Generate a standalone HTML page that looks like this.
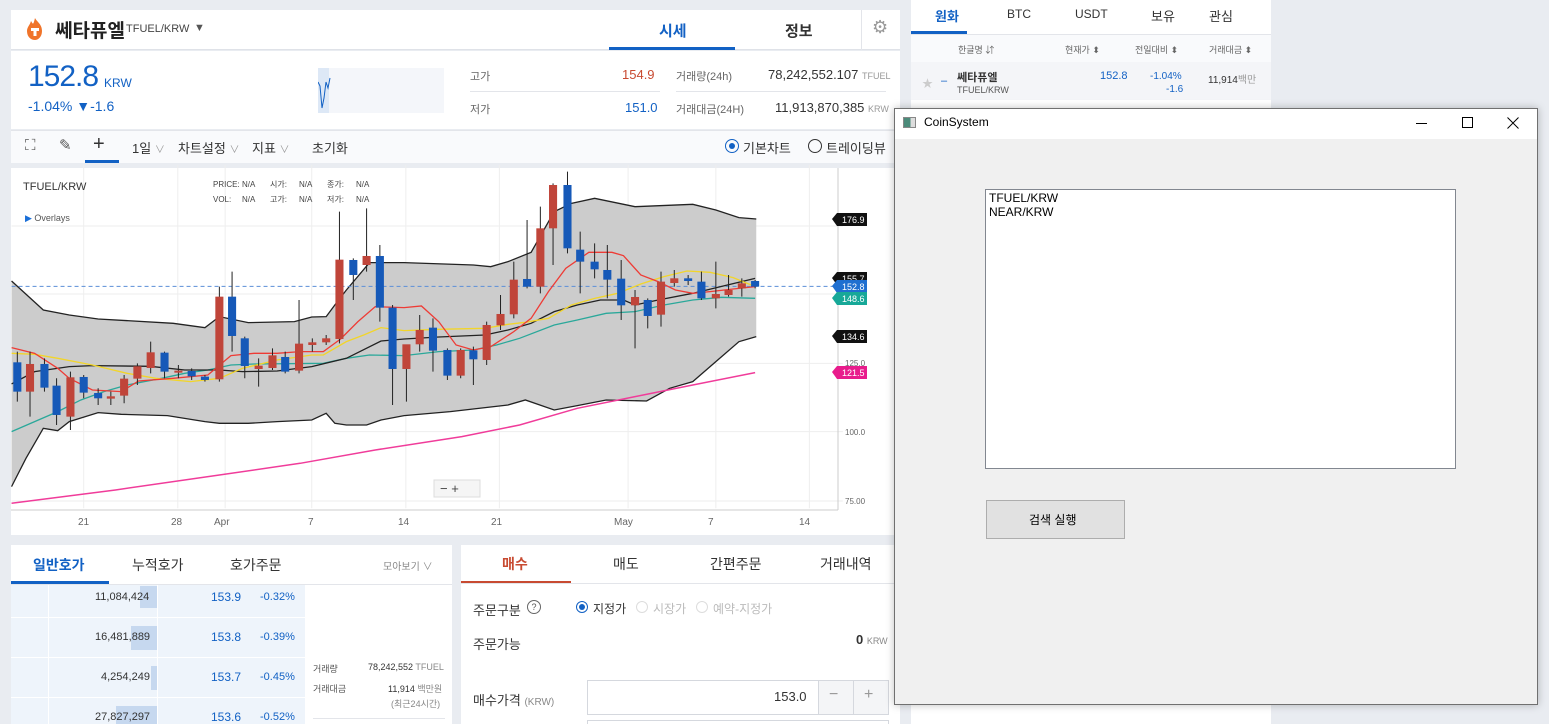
<!DOCTYPE html>
<html><head><meta charset="utf-8">
<style>
*{box-sizing:border-box;margin:0;padding:0}
body{width:1549px;height:724px;overflow:hidden;background:#e9ecf1;font-family:"Liberation Sans","Noto Sans CJK KR",sans-serif;position:relative;color:#333}
.a{position:absolute}
.w{background:#fff}
.t{position:absolute;white-space:nowrap}
</style></head><body>

<!-- header -->
<div class="a w" style="left:11px;top:10px;width:889px;height:40px;border-bottom:1px solid #dfe2e8"></div>
<svg class="a" style="left:24px;top:17px" width="22" height="24" viewBox="0 0 22 24"><path d="M11 1C13 5 18 7 18 14C18 20 14 23 11 23C7 23 3 20 3 14C3 10 6 8 7 4C9 7 9 9 11 1Z" fill="#f0742a"/><rect x="7" y="11" width="8" height="3" fill="#fff"/><rect x="9.5" y="11" width="3" height="8" fill="#fff"/></svg>
<div class="t" style="left:55px;top:16px;font-size:19px;font-weight:bold;color:#222">쎄타퓨엘</div>
<div class="t" style="left:126px;top:23px;font-size:11px;color:#444">TFUEL/KRW</div>
<div class="t" style="left:194px;top:22px;font-size:11px;color:#555">▼</div>
<div class="t" style="left:659px;top:20px;font-size:15px;font-weight:bold;color:#1261c4">시세</div>
<div class="a" style="left:609px;top:47px;width:126px;height:3px;background:#1261c4"></div>
<div class="t" style="left:785px;top:20px;font-size:15px;font-weight:bold;color:#333">정보</div>
<div class="a" style="left:861px;top:10px;width:1px;height:40px;background:#e3e5ea"></div>
<div class="t" style="left:872px;top:17px;font-size:18px;color:#999">⚙</div>

<!-- price -->
<div class="a w" style="left:11px;top:51px;width:889px;height:78px"></div>
<div class="t" style="left:28px;top:60px;font-size:30px;color:#1261c4;letter-spacing:-1px">152.8</div>
<div class="t" style="left:104px;top:76px;font-size:12px;color:#1261c4">KRW</div>
<div class="t" style="left:28px;top:98px;font-size:14px;color:#1261c4">-1.04% ▼-1.6</div>
<div class="a" style="left:318px;top:68px;width:126px;height:45px;background:#f4f6fa"></div>
<div class="a" style="left:318px;top:68px;width:11px;height:45px;background:#dde8f6"></div>
<svg class="a" style="left:318px;top:68px" width="20" height="45"><path d="M0 14 L2 18 L4 40 L6 30 L8 14 L10 20 L12 10" stroke="#1261c4" fill="none"/></svg>
<div class="t" style="left:470px;top:68px;font-size:11px;color:#666">고가</div>
<div class="t" style="left:622px;top:67px;font-size:13px;color:#c84a31">154.9</div>
<div class="a" style="left:470px;top:91px;width:190px;height:1px;background:#e3e5ea"></div>
<div class="t" style="left:470px;top:101px;font-size:11px;color:#666">저가</div>
<div class="t" style="left:625px;top:100px;font-size:13px;color:#1261c4">151.0</div>
<div class="t" style="left:676px;top:68px;font-size:11px;color:#666">거래량(24h)</div>
<div class="t" style="left:768px;top:67px;font-size:13px;color:#333">78,242,552.107 <span style="font-size:9px;color:#999">TFUEL</span></div>
<div class="a" style="left:676px;top:91px;width:210px;height:1px;background:#e3e5ea"></div>
<div class="t" style="left:676px;top:101px;font-size:11px;color:#666">거래대금(24H)</div>
<div class="t" style="left:775px;top:100px;font-size:13px;color:#333">11,913,870,385 <span style="font-size:9px;color:#999">KRW</span></div>

<!-- toolbar -->
<div class="a" style="left:11px;top:130px;width:889px;height:33px;background:#f9fafc;border-top:1px solid #e3e5ea"></div>
<div class="t" style="left:25px;top:137px;font-size:15px;color:#555">⛶</div>
<div class="t" style="left:59px;top:136px;font-size:15px;color:#555">✎</div>
<div class="t" style="left:93px;top:133px;font-size:20px;color:#333">+</div>
<div class="a" style="left:85px;top:160px;width:34px;height:3px;background:#1261c4"></div>
<div class="t" style="left:132px;top:138px;font-size:13px;color:#333">1일 <span style="color:#999;font-size:10px">∨</span></div>
<div class="t" style="left:178px;top:138px;font-size:13px;color:#333">차트설정 <span style="color:#999;font-size:10px">∨</span></div>
<div class="t" style="left:252px;top:138px;font-size:13px;color:#333">지표 <span style="color:#999;font-size:10px">∨</span></div>
<div class="t" style="left:312px;top:138px;font-size:13px;color:#333">초기화</div>
<div class="a" style="left:725px;top:139px;width:14px;height:14px;border:1.5px solid #1261c4;border-radius:50%"></div>
<div class="a" style="left:729px;top:143px;width:6px;height:6px;background:#1261c4;border-radius:50%"></div>
<div class="t" style="left:743px;top:138px;font-size:13px;color:#333">기본차트</div>
<div class="a" style="left:808px;top:139px;width:14px;height:14px;border:1.5px solid #333;border-radius:50%"></div>
<div class="t" style="left:826px;top:138px;font-size:13px;color:#333">트레이딩뷰</div>

<!-- chart -->
<div class="a w" style="left:11px;top:168px;width:889px;height:367px"></div>
<svg class="a" style="left:0;top:0" width="900" height="540">
<g transform="translate(0,165) scale(0.5773,0.3333)">
<g stroke="#eeeeee" stroke-width="1">
<line x1="145" y1="0" x2="145" y2="1030" vector-effect="non-scaling-stroke"/><line x1="308" y1="0" x2="308" y2="1030" vector-effect="non-scaling-stroke"/><line x1="390" y1="0" x2="390" y2="1030" vector-effect="non-scaling-stroke"/><line x1="540" y1="0" x2="540" y2="1030" vector-effect="non-scaling-stroke"/><line x1="703" y1="0" x2="703" y2="1030" vector-effect="non-scaling-stroke"/><line x1="865" y1="0" x2="865" y2="1030" vector-effect="non-scaling-stroke"/><line x1="1088" y1="0" x2="1088" y2="1030" vector-effect="non-scaling-stroke"/><line x1="1240" y1="0" x2="1240" y2="1030" vector-effect="non-scaling-stroke"/><line x1="1402" y1="0" x2="1402" y2="1030" vector-effect="non-scaling-stroke"/>
<line x1="20" y1="183" x2="1460" y2="183" vector-effect="non-scaling-stroke"/><line x1="20" y1="387" x2="1460" y2="387" vector-effect="non-scaling-stroke"/><line x1="20" y1="595" x2="1460" y2="595" vector-effect="non-scaling-stroke"/><line x1="20" y1="800" x2="1460" y2="800" vector-effect="non-scaling-stroke"/><line x1="20" y1="1008" x2="1460" y2="1008" vector-effect="non-scaling-stroke"/>
</g>
<polygon fill="#cccccc" points="20,348 75,435 120,450 170,462 300,475 355,488 380,455 430,473 510,470 540,456 565,455 580,420 600,375 640,293 700,293 820,300 850,305 880,290 920,262 960,140 990,115 1030,100 1100,125 1200,118 1240,135 1280,158 1310,162 1310,515 1280,530 1240,590 1200,650 1160,670 1120,708 1050,705 1000,722 960,735 910,705 880,720 780,740 700,752 660,765 635,780 600,780 580,775 565,745 540,765 480,770 430,775 380,775 355,770 290,752 210,748 170,743 120,770 100,797 75,790 45,880 20,965"/>
<polyline fill="none" stroke="#222" stroke-width="1.3" vector-effect="non-scaling-stroke" points="20,348 75,435 120,450 170,462 300,475 355,488 380,455 430,473 510,470 540,456 565,455 580,420 600,375 640,293 700,293 820,300 850,305 880,290 920,262 960,140 990,115 1030,100 1100,125 1200,118 1240,135 1280,158 1310,162"/>
<polyline fill="none" stroke="#222" stroke-width="1.3" vector-effect="non-scaling-stroke" points="1310,515 1280,530 1240,590 1200,650 1160,670 1120,708 1050,705 1000,722 960,735 910,705 880,720 780,740 700,752 660,765 635,780 600,780 580,775 565,745 540,765 480,770 430,775 380,775 355,770 290,752 210,748 170,743 120,770 100,797 75,790 45,880 20,965"/>
<line x1="20" y1="364" x2="1460" y2="364" stroke="#5b8fd8" stroke-dasharray="4 3" vector-effect="non-scaling-stroke"/>
<polyline fill="none" stroke="#f03c9a" stroke-width="1.5" vector-effect="non-scaling-stroke" points="20,1015 200,975 380,930 520,895 650,855 800,815 900,780 1000,730 1100,695 1200,660 1308,623"/>
<polyline fill="none" stroke="#2aa89a" stroke-width="1.3" vector-effect="non-scaling-stroke" points="20,800 60,770 100,740 140,705 180,680 220,660 280,640 320,625 360,615 400,600 440,597 560,595 600,580 640,570 700,572 760,560 820,555 860,540 900,520 960,480 1000,465 1050,445 1100,440 1150,420 1200,405 1250,397 1308,400"/>
<polyline fill="none" stroke="#222" stroke-width="1.3" vector-effect="non-scaling-stroke" points="20,657 60,620 120,605 160,602 260,604 320,615 380,615 420,620 480,618 540,605 600,580 660,528 700,522 760,516 840,510 880,495 920,475 960,440 1000,420 1040,405 1080,405 1100,420 1140,405 1200,385 1260,360 1308,340"/>
<polyline fill="none" stroke="#f2d52a" stroke-width="1.3" vector-effect="non-scaling-stroke" points="20,565 60,568 100,580 160,600 220,625 270,640 330,650 380,640 420,610 480,585 540,570 560,570 600,530 630,510 660,488 700,497 760,493 840,490 880,478 910,472 950,460 990,420 1030,400 1070,385 1110,357 1150,335 1190,318 1230,322 1270,338 1308,365"/>
<polyline fill="none" stroke="#ee3b35" stroke-width="1.3" vector-effect="non-scaling-stroke" points="20,548 60,565 100,610 120,640 160,675 210,680 240,648 300,640 360,630 400,572 440,565 480,565 520,560 560,560 590,522 620,470 650,425 700,428 730,423 760,470 790,540 820,555 850,545 890,500 920,460 950,380 980,310 1020,262 1060,262 1080,272 1110,330 1140,350 1170,375 1200,385 1230,380 1270,372 1308,365"/>
<g stroke="#222">
<path vector-effect="non-scaling-stroke" d="M30 560V710M52 560V755M77 580V680M98 640V780M122 620V795M145 630V700M170 670V720M192 680V720M215 630V715M238 595V660M261 530V625M285 560V640M309 600V640M332 610V645M355 630V650M380 365V650M402 320V560M424 515V640M448 580V665M472 550V615M494 560V625M518 405V625M541 520V560M565 510V540M588 140V535M612 280V405M635 130V320M658 240V470M680 420V720M704 540V710M727 450V560M750 460V620M775 550V645M798 550V640M820 545V660M843 470V600M867 390V495M890 290V460M913 165V370M936 125V385M958 55V300M983 20V265M1005 200V385M1030 235V340M1052 240V400M1076 285V465M1100 375V550M1122 400V490M1145 320V485M1168 315V365M1192 330V360M1215 320V405M1240 290V430M1262 330V395M1285 340V395M1308 345V370"/>
</g>
<g fill="#1659b8">
<rect x="23" y="592" width="14" height="88"/><rect x="70" y="597" width="14" height="71"/><rect x="91" y="662" width="14" height="88"/><rect x="138" y="636" width="14" height="47"/><rect x="163" y="684" width="14" height="16"/><rect x="278" y="563" width="14" height="57"/><rect x="325" y="618" width="14" height="16"/><rect x="348" y="635" width="14" height="10"/><rect x="395" y="395" width="14" height="118"/><rect x="417" y="520" width="14" height="83"/><rect x="487" y="576" width="14" height="44"/><rect x="605" y="285" width="14" height="45"/><rect x="651" y="273" width="14" height="155"/><rect x="673" y="428" width="14" height="184"/><rect x="743" y="488" width="14" height="69"/><rect x="768" y="555" width="14" height="77"/><rect x="813" y="556" width="14" height="27"/><rect x="906" y="342" width="14" height="23"/><rect x="976" y="60" width="14" height="190"/><rect x="998" y="254" width="14" height="36"/><rect x="1023" y="290" width="14" height="23"/><rect x="1045" y="315" width="14" height="29"/><rect x="1069" y="341" width="14" height="80"/><rect x="1115" y="405" width="14" height="48"/><rect x="1185" y="340" width="14" height="8"/><rect x="1208" y="350" width="14" height="50"/><rect x="1301" y="348" width="14" height="17"/>
</g>
<g fill="#c0453a">
<rect x="45" y="597" width="14" height="83"/><rect x="115" y="637" width="14" height="118"/><rect x="185" y="694" width="14" height="7"/><rect x="208" y="641" width="14" height="51"/><rect x="231" y="604" width="14" height="37"/><rect x="254" y="562" width="14" height="47"/><rect x="302" y="617" width="14" height="6"/><rect x="373" y="395" width="14" height="248"/><rect x="441" y="602" width="14" height="10"/><rect x="465" y="571" width="14" height="38"/><rect x="511" y="536" width="14" height="81"/><rect x="534" y="532" width="14" height="8"/><rect x="558" y="520" width="14" height="12"/><rect x="581" y="284" width="14" height="238"/><rect x="628" y="273" width="14" height="27"/><rect x="697" y="538" width="14" height="74"/><rect x="720" y="495" width="14" height="43"/><rect x="791" y="555" width="14" height="77"/><rect x="836" y="480" width="14" height="105"/><rect x="860" y="447" width="14" height="34"/><rect x="883" y="344" width="14" height="104"/><rect x="929" y="190" width="14" height="175"/><rect x="951" y="60" width="14" height="130"/><rect x="1093" y="396" width="14" height="25"/><rect x="1138" y="350" width="14" height="99"/><rect x="1161" y="340" width="14" height="14"/><rect x="1233" y="387" width="14" height="13"/><rect x="1255" y="375" width="14" height="15"/><rect x="1278" y="355" width="14" height="15"/>
</g>
</g>
<line x1="838" y1="168" x2="838" y2="510" stroke="#ccc"/>
<line x1="11" y1="510" x2="838" y2="510" stroke="#ccc"/>
<g font-family="Liberation Sans" font-size="10" fill="#666">
<text x="78" y="525">21</text><text x="171" y="525">28</text><text x="214" y="525">Apr</text><text x="308" y="525">7</text><text x="398" y="525">14</text><text x="491" y="525">21</text><text x="614" y="525">May</text><text x="708" y="525">7</text><text x="799" y="525">14</text>
<text x="845" y="366" font-size="8">125.0</text><text x="845" y="435" font-size="8">100.0</text><text x="845" y="504" font-size="8">75.00</text>
</g>
<g font-family="Liberation Sans" font-size="9" fill="#fff">
<path d="M832 219l5-6h30v13h-30z" fill="#111"/><text x="842" y="223">176.9</text>
<path d="M832 278l5-6h30v13h-30z" fill="#111"/><text x="842" y="282">155.7</text>
<path d="M832 286l5-6h30v13h-30z" fill="#1f6fd0"/><text x="842" y="290">152.8</text>
<path d="M832 298l5-6h30v13h-30z" fill="#17a898"/><text x="842" y="302">148.6</text>
<path d="M832 336l5-6h30v13h-30z" fill="#111"/><text x="842" y="340">134.6</text>
<path d="M832 372l5-6h30v13h-30z" fill="#e81c8c"/><text x="842" y="376">121.5</text>
</g>
<text x="23" y="190" font-family="Liberation Sans" font-size="11" fill="#333">TFUEL/KRW</text>
<text x="25" y="221" font-family="Liberation Sans" font-size="9" fill="#555"><tspan fill="#1a6fd8">▶</tspan> Overlays</text>
<g font-family="Liberation Sans,Noto Sans CJK KR" font-size="8" fill="#444">
<text x="213" y="187">PRICE:</text><text x="242" y="187">N/A</text><text x="270" y="187">시가:</text><text x="299" y="187">N/A</text><text x="327" y="187">종가:</text><text x="356" y="187">N/A</text>
<text x="213" y="202">VOL:</text><text x="242" y="202">N/A</text><text x="270" y="202">고가:</text><text x="299" y="202">N/A</text><text x="327" y="202">저가:</text><text x="356" y="202">N/A</text>
</g>
<rect x="434" y="480" width="46" height="17" fill="#f5f5f5" stroke="#ddd"/>
<text x="440" y="493" font-size="13" fill="#444">− +</text>
</svg>

<!-- orderbook -->
<div class="a w" style="left:11px;top:545px;width:441px;height:179px"></div>
<div class="t" style="left:33px;top:555px;font-size:14px;color:#1261c4;font-weight:bold">일반호가</div>
<div class="a" style="left:11px;top:581px;width:98px;height:3px;background:#1261c4"></div>
<div class="t" style="left:132px;top:555px;font-size:14px;color:#333">누적호가</div>
<div class="t" style="left:230px;top:555px;font-size:14px;color:#333">호가주문</div>
<div class="t" style="left:383px;top:558px;font-size:10px;color:#888">모아보기 ∨</div>
<div class="a" style="left:11px;top:584px;width:441px;height:1px;background:#e3e5ea"></div>
<div class="a" style="left:11px;top:585px;width:294px;height:139px;background:#eef4fb"></div>
<div class="a" style="left:48px;top:585px;width:1px;height:139px;background:#fff"></div>
<div class="a" style="left:157px;top:585px;width:1px;height:139px;background:#fff"></div>
<div class="a" style="left:11px;top:617px;width:294px;height:1px;background:#fff"></div>
<div class="a" style="left:11px;top:657px;width:294px;height:1px;background:#fff"></div>
<div class="a" style="left:11px;top:697px;width:294px;height:1px;background:#fff"></div>
<div class="a" style="left:140px;top:586px;width:17px;height:22px;background:#c6d8ef"></div>
<div class="a" style="left:131px;top:626px;width:26px;height:24px;background:#c6d8ef"></div>
<div class="a" style="left:151px;top:666px;width:6px;height:24px;background:#c6d8ef"></div>
<div class="a" style="left:116px;top:706px;width:41px;height:18px;background:#c6d8ef"></div>
<div class="t" style="left:95px;top:591px;font-size:11px;color:#333">11,084,424</div>
<div class="t" style="left:95px;top:631px;font-size:11px;color:#333">16,481,889</div>
<div class="t" style="left:101px;top:671px;font-size:11px;color:#333">4,254,249</div>
<div class="t" style="left:95px;top:711px;font-size:11px;color:#333">27,827,297</div>
<div class="t" style="left:211px;top:590px;font-size:12px;color:#1261c4">153.9</div><div class="t" style="left:260px;top:591px;font-size:11px;color:#1261c4">-0.32%</div>
<div class="t" style="left:211px;top:630px;font-size:12px;color:#1261c4">153.8</div><div class="t" style="left:260px;top:631px;font-size:11px;color:#1261c4">-0.39%</div>
<div class="t" style="left:211px;top:670px;font-size:12px;color:#1261c4">153.7</div><div class="t" style="left:260px;top:671px;font-size:11px;color:#1261c4">-0.45%</div>
<div class="t" style="left:211px;top:710px;font-size:12px;color:#1261c4">153.6</div><div class="t" style="left:260px;top:711px;font-size:11px;color:#1261c4">-0.52%</div>
<div class="t" style="left:313px;top:662px;font-size:9px;color:#555">거래량</div>
<div class="t" style="left:368px;top:662px;font-size:9px;color:#333">78,242,552 <span style="color:#888">TFUEL</span></div>
<div class="t" style="left:313px;top:682px;font-size:9px;color:#555">거래대금</div>
<div class="t" style="left:388px;top:682px;font-size:9px;color:#333">11,914 <span style="color:#888">백만원</span></div>
<div class="t" style="left:391px;top:697px;font-size:9px;color:#888">(최근24시간)</div>
<div class="a" style="left:313px;top:718px;width:132px;height:1px;background:#e3e5ea"></div>

<!-- order form -->
<div class="a w" style="left:461px;top:545px;width:439px;height:179px"></div>
<div class="t" style="left:502px;top:554px;font-size:14px;color:#c84a31;font-weight:bold">매수</div>
<div class="a" style="left:461px;top:581px;width:110px;height:3px;background:#c84a31"></div>
<div class="t" style="left:613px;top:554px;font-size:14px;color:#333">매도</div>
<div class="t" style="left:710px;top:554px;font-size:14px;color:#333">간편주문</div>
<div class="t" style="left:820px;top:554px;font-size:14px;color:#333">거래내역</div>
<div class="a" style="left:461px;top:583px;width:439px;height:1px;background:#e3e5ea"></div>
<div class="t" style="left:473px;top:600px;font-size:13px;color:#333">주문구분</div>
<div class="a" style="left:527px;top:600px;width:14px;height:14px;border:1px solid #666;border-radius:50%;font-size:9px;text-align:center;line-height:12px;color:#555">?</div>
<div class="a" style="left:576px;top:601px;width:12px;height:12px;border:1.5px solid #1261c4;border-radius:50%"></div>
<div class="a" style="left:579px;top:604px;width:6px;height:6px;background:#1261c4;border-radius:50%"></div>
<div class="t" style="left:593px;top:600px;font-size:12px;color:#333">지정가</div>
<div class="a" style="left:636px;top:601px;width:12px;height:12px;border:1px solid #ddd;border-radius:50%"></div>
<div class="t" style="left:653px;top:600px;font-size:12px;color:#bbb">시장가</div>
<div class="a" style="left:696px;top:601px;width:12px;height:12px;border:1px solid #ddd;border-radius:50%"></div>
<div class="t" style="left:713px;top:600px;font-size:12px;color:#bbb">예약-지정가</div>
<div class="t" style="left:473px;top:634px;font-size:13px;color:#333">주문가능</div>
<div class="t" style="left:856px;top:632px;font-size:13px;color:#333;font-weight:bold">0 <span style="font-size:9px;color:#888;font-weight:normal">KRW</span></div>
<div class="t" style="left:473px;top:690px;font-size:13px;color:#333">매수가격 <span style="font-size:10px;color:#888">(KRW)</span></div>
<div class="a" style="left:587px;top:680px;width:302px;height:35px;border:1px solid #d5d8de;background:#fff"></div>
<div class="a" style="left:818px;top:680px;width:71px;height:35px;border:1px solid #d5d8de;background:#f4f5f7"></div>
<div class="a" style="left:853px;top:680px;width:1px;height:35px;background:#d5d8de"></div>
<div class="t" style="left:774px;top:689px;font-size:13px;color:#333">153.0</div>
<div class="t" style="left:829px;top:686px;font-size:16px;color:#999">−</div>
<div class="t" style="left:864px;top:686px;font-size:16px;color:#999">+</div>
<div class="a" style="left:587px;top:720px;width:302px;height:4px;border:1px solid #d5d8de;border-bottom:none"></div>

<!-- right panel -->
<div class="a w" style="left:911px;top:0;width:360px;height:724px"></div>
<div class="t" style="left:935px;top:6px;font-size:13px;color:#1261c4;font-weight:bold">원화</div>
<div class="a" style="left:911px;top:31px;width:56px;height:3px;background:#1261c4"></div>
<div class="t" style="left:1007px;top:7px;font-size:12px;color:#333">BTC</div>
<div class="t" style="left:1075px;top:7px;font-size:12px;color:#333">USDT</div>
<div class="t" style="left:1151px;top:6px;font-size:13px;color:#333">보유</div>
<div class="t" style="left:1209px;top:6px;font-size:13px;color:#333">관심</div>
<div class="a" style="left:911px;top:34px;width:360px;height:28px;background:#f9fafc;border-top:1px solid #e3e5ea"></div>
<div class="t" style="left:958px;top:43px;font-size:9px;color:#666">한글명 ⇵</div>
<div class="t" style="left:1065px;top:43px;font-size:9px;color:#666">현재가 ⬍</div>
<div class="t" style="left:1135px;top:43px;font-size:9px;color:#666">전일대비 ⬍</div>
<div class="t" style="left:1209px;top:43px;font-size:9px;color:#666">거래대금 ⬍</div>
<div class="a" style="left:911px;top:62px;width:360px;height:38px;background:#f4f5f8"></div>
<div class="t" style="left:922px;top:75px;font-size:11px;color:#ccc">★</div>
<div class="t" style="left:941px;top:75px;font-size:11px;color:#1261c4">–</div>
<div class="t" style="left:957px;top:69px;font-size:11px;color:#333;font-weight:bold">쎄타퓨엘</div>
<div class="t" style="left:957px;top:85px;font-size:9px;color:#555">TFUEL/KRW</div>
<div class="t" style="left:1100px;top:70px;font-size:11px;color:#1261c4">152.8</div>
<div class="t" style="left:1150px;top:71px;font-size:10px;color:#1261c4">-1.04%</div>
<div class="t" style="left:1166px;top:84px;font-size:10px;color:#1261c4">-1.6</div>
<div class="t" style="left:1208px;top:71px;font-size:10px;color:#333">11,914<span style="color:#999">백만</span></div>

<!-- window -->
<div class="a" style="left:894px;top:108px;width:644px;height:597px;border:1px solid #707070;background:#f0f0f0;box-shadow:0 0 8px rgba(0,0,0,0.25)"></div>
<div class="a" style="left:895px;top:109px;width:642px;height:30px;background:#fff"></div>
<div class="a" style="left:903px;top:117px;width:13px;height:11px;border:1px solid #888;background:linear-gradient(90deg,#4c8b7a 60%,#ddd 60%)"></div>
<div class="t" style="left:924px;top:115px;font-size:12px;color:#000">CoinSystem</div>
<div class="a" style="left:1416px;top:123px;width:11px;height:1px;background:#000"></div>
<div class="a" style="left:1462px;top:117px;width:11px;height:11px;border:1px solid #000"></div>
<svg class="a" style="left:1507px;top:117px" width="12" height="12"><path d="M0.5 0.5L11.5 11.5M11.5 0.5L0.5 11.5" stroke="#000" stroke-width="1"/></svg>
<div class="a" style="left:985px;top:189px;width:471px;height:280px;background:#fff;border:1px solid #828790"></div>
<div class="t" style="left:989px;top:191px;font-size:12px;line-height:14px;color:#000">TFUEL/KRW<br>NEAR/KRW</div>
<div class="a" style="left:986px;top:500px;width:139px;height:39px;background:#e1e1e1;border:1px solid #adadad"></div>
<div class="t" style="left:1029px;top:511px;font-size:12px;color:#000">검색 실행</div>
</body></html>
